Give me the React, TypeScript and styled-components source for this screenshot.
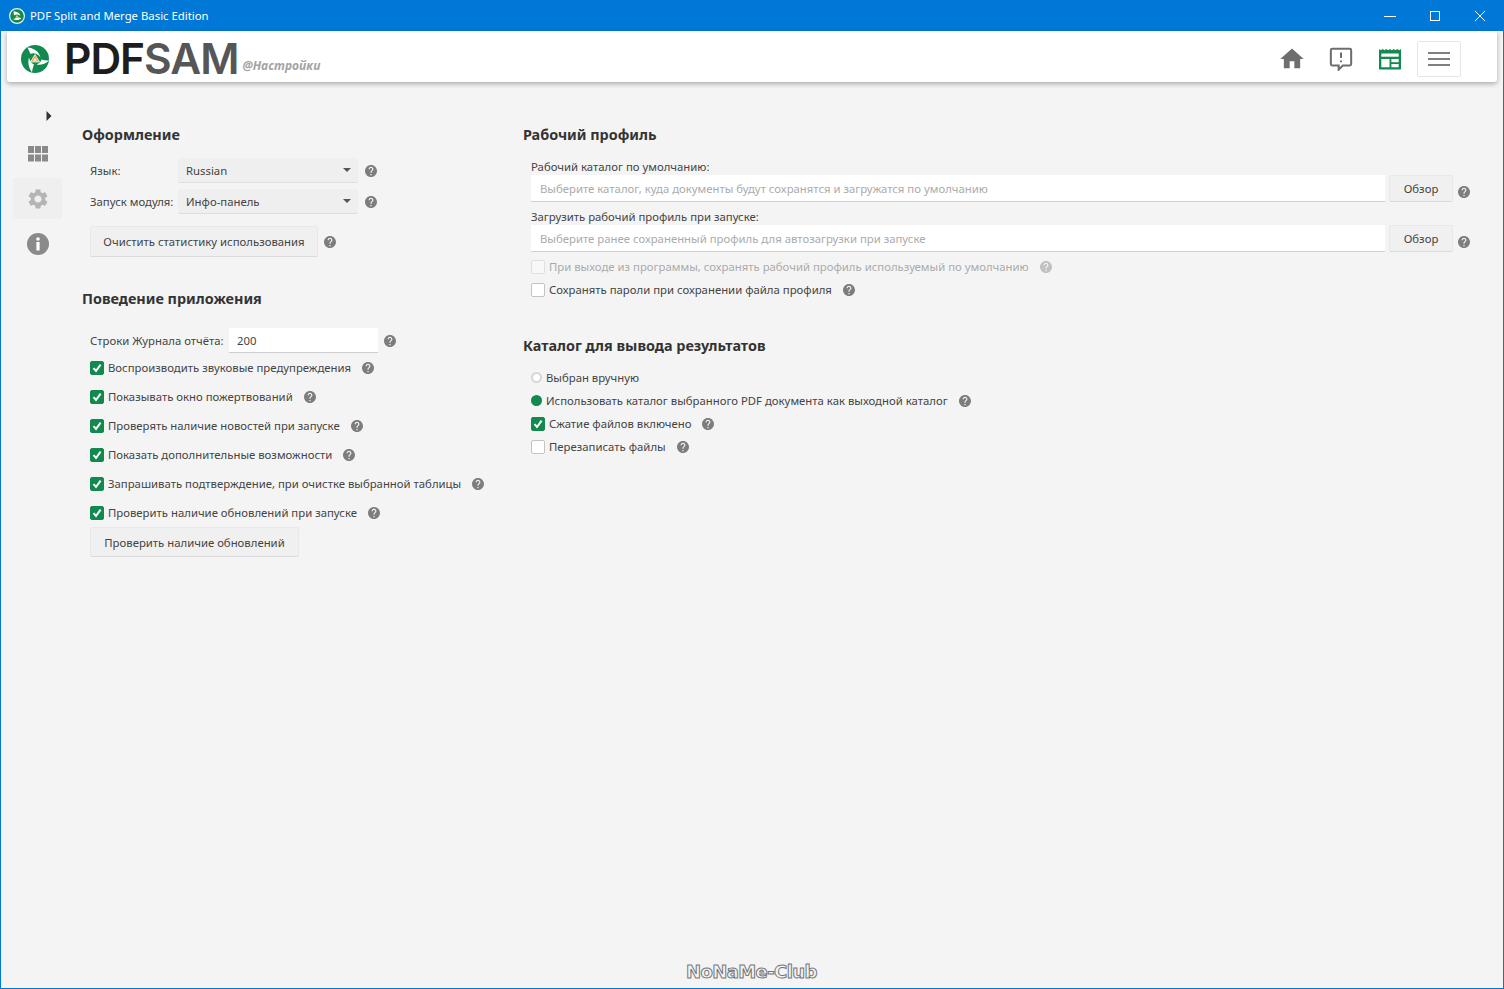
import styled, { createGlobalStyle } from 'styled-components';

const GlobalStyle = createGlobalStyle`
    html, body {
        margin: 0;
        padding: 0;
        background: #f4f4f4;
    }
    * {
        box-sizing: border-box;
    }
`;

const Window = styled.div`
    position: relative;
    width: 1504px;
    height: 989px;
    display: flex;
    flex-direction: column;
    overflow: hidden;
    background: #f4f4f4;
    border: 1px solid #0078d7;
    border-top: 0;
    font-family: 'Noto Sans', 'Open Sans', sans-serif;
    font-size: 11.35px;
    color: #444;
`;

const TitleBar = styled.div`
    height: 31px;
    flex-shrink: 0;
    display: flex;
    align-items: center;
    margin: 0 -1px;
    padding: 0 2px 0 9px;
    background: #0078d7;
    color: #fff;
`;

const TitleText = styled.span`
    margin-left: 5px;
    flex: 1;
`;

const WindowButton = styled.div`
    width: 45px;
    height: 31px;
    display: flex;
    align-items: center;
    justify-content: center;
`;

const Header = styled.header`
    height: 51px;
    flex-shrink: 0;
    margin: 0 6px;
    display: flex;
    align-items: center;
    padding: 5px 36px 0 14px;
    background: #fff;
    border-radius: 0 0 3px 3px;
    box-shadow: 0 2px 5px rgba(0, 0, 0, 0.3);
`;

const Wordmark = styled.div`
    margin-left: 15px;
    font-family: Inter, sans-serif;
    font-size: 42.5px;
    font-weight: 600;
    line-height: 46px;
    letter-spacing: -1px;
    color: #1d1d1d;

    span {
        color: #565656;
    }
`;

const Module = styled.div`
    margin: 12px 0 0 4px;
    font-family: 'Open Sans', sans-serif;
    font-size: 12px;
    font-weight: 700;
    font-style: italic;
    color: #a3a3a3;
`;

const Spacer = styled.div`
    flex: 1;
`;

const HeaderIcon = styled.div`
    width: 49px;
    display: flex;
    justify-content: center;
`;

const MenuButton = styled.div`
    width: 44px;
    height: 36px;
    margin-left: 3px;
    display: flex;
    align-items: center;
    justify-content: center;
    border: 1px solid #e6e6e6;
    border-radius: 2px;
`;

const Body = styled.div`
    flex: 1;
    display: flex;
    min-height: 0;
`;

const Sidebar = styled.nav`
    width: 67px;
    flex-shrink: 0;
    padding-top: 23px;
    display: flex;
    flex-direction: column;
`;

const Toggle = styled.div`
    height: 22px;
    margin-bottom: 4px;
    padding-left: 45px;
    display: flex;
    align-items: center;
`;

const NavItem = styled.div<{ $active?: boolean }>`
    width: 49px;
    height: 41px;
    margin: 2px 0 2px 12px;
    display: flex;
    align-items: center;
    justify-content: center;
    background: ${p => (p.$active ? '#efefef' : 'transparent')};
`;

const LeftColumn = styled.section`
    width: 441px;
    flex-shrink: 0;
    margin-left: 14px;
    padding-top: 43px;
`;

const RightColumn = styled.section`
    flex: 1;
    padding: 43px 33px 0 0;
`;

const Heading = styled.h2<{ $top?: number }>`
    margin: ${p => p.$top ?? 0}px 0 0;
    height: 20px;
    font-size: 14.4px;
    font-weight: 700;
    line-height: 20px;
    color: #333;
`;

const Group = styled.div<{ $top?: number }>`
    margin-top: ${p => p.$top ?? 0}px;
    padding-left: 8px;
`;

const FieldRow = styled.div<{ $top?: number }>`
    display: flex;
    align-items: center;
    margin-top: ${p => p.$top ?? 0}px;
`;

const FieldLabel = styled.span<{ $width: number }>`
    width: ${p => p.$width}px;
    flex-shrink: 0;
    white-space: nowrap;
`;

const Select = styled.div`
    width: 180px;
    height: 25px;
    padding: 0 7px 0 8px;
    display: flex;
    align-items: center;
    justify-content: space-between;
    background: #efefef;
    border-bottom: 1px solid #dedede;
    border-radius: 2px;
`;

const Caret = styled.i`
    width: 0;
    height: 0;
    border-left: 4px solid transparent;
    border-right: 4px solid transparent;
    border-top: 4px solid #555;
`;

const Button = styled.button<{ $width: number; $height?: number }>`
    width: ${p => p.$width}px;
    height: ${p => p.$height ?? 31}px;
    flex-shrink: 0;
    padding: 0;
    background: #f0f0f0;
    border: 1px solid #e8e8e8;
    border-bottom-color: #dadada;
    border-radius: 2px;
    font: inherit;
    color: #444;
`;

const NumberInput = styled.div`
    width: 149px;
    height: 25px;
    padding: 0 8px;
    display: flex;
    align-items: center;
    background: #fff;
    border-bottom: 1px solid #cfcfcf;
`;

const CheckRow = styled.label<{ $height: number; $disabled?: boolean; $top?: number }>`
    height: ${p => p.$height}px;
    margin-top: ${p => p.$top ?? 0}px;
    display: flex;
    align-items: center;
    white-space: nowrap;
    opacity: ${p => (p.$disabled ? 0.42 : 1)};
`;

const Box = styled.span<{ $checked?: boolean }>`
    width: 14px;
    height: 14px;
    margin-right: 4px;
    flex-shrink: 0;
    display: flex;
    align-items: center;
    justify-content: center;
    border-radius: 2px;
    background: ${p => (p.$checked ? '#12894e' : '#fff')};
    border: 1px solid ${p => (p.$checked ? '#12894e' : '#c4c4c4')};
`;

const Radio = styled.span<{ $checked?: boolean }>`
    width: 11px;
    height: 11px;
    margin-right: 4px;
    flex-shrink: 0;
    border-radius: 50%;
    background: ${p => (p.$checked ? '#12894e' : '#fff')};
    border: ${p => (p.$checked ? '0' : '2px solid #d6d6d6')};
`;

const FieldLine = styled.div<{ $top: number }>`
    height: 16px;
    line-height: 16px;
    margin-top: ${p => p.$top}px;
    white-space: nowrap;
`;

const PathRow = styled.div`
    display: flex;
    align-items: center;
`;

const PathInput = styled.div`
    flex: 1;
    height: 27px;
    padding: 0 9px;
    display: flex;
    align-items: center;
    background: #fff;
    border-bottom: 1px solid #cfcfcf;
    color: #ababab;
`;

const BrowseButton = styled(Button)`
    margin-left: 4px;
`;

const HelpWrap = styled.span<{ $gap: number; $drop?: number }>`
    display: inline-flex;
    flex-shrink: 0;
    margin-left: ${p => p.$gap}px;
    margin-top: ${p => p.$drop ?? 0}px;
`;

const Watermark = styled.div`
    position: absolute;
    left: 685px;
    bottom: 6px;
    font-family: 'DejaVu Sans', sans-serif;
    font-size: 18px;
    font-weight: 700;
    letter-spacing: -0.6px;
    color: #f4f4f4;
    -webkit-text-stroke: 1px #777;
`;

const Help = ({ gap, drop }: { gap: number; drop?: number }) => (
    <HelpWrap $gap={gap} $drop={drop}>
        <svg width="12" height="12" viewBox="2 2 20 20" fill="#7d7d7d">
            <path d="M12 2C6.48 2 2 6.48 2 12s4.48 10 10 10 10-4.48 10-10S17.52 2 12 2zm1 17h-2v-2h2v2zm2.07-7.75l-.9.92C13.45 12.9 13 13.5 13 15h-2v-.5c0-1.1.45-2.1 1.17-2.83l1.24-1.26c.37-.36.59-.86.59-1.41 0-1.1-.9-2-2-2s-2 .9-2 2H8c0-2.21 1.79-4 4-4s4 1.79 4 4c0 .88-.36 1.68-.93 2.25z" />
        </svg>
    </HelpWrap>
);

const Tick = () => (
    <svg width="10" height="10" viewBox="0 0 10 10" fill="none" stroke="#fff" strokeWidth="2">
        <path d="M1.5 5.2 L4 8 L8.6 1.6" />
    </svg>
);

const Logo = ({ size }: { size: number }) => (
    <svg width={size} height={size} viewBox="0 0 28 28">
        <circle cx="14" cy="14" r="14" fill="#12894e" />
        <path d="M6.5 2.500 C12 3 18 6 19.500 12.500 C16.500 8.500 12.500 7.500 9.500 9 C8.500 7 7.500 4.500 6.500 2.500Z" fill="#fff" />
        <path d="M28 15.500 C24 19.500 19 20.500 15.500 19.500 C18.500 18.500 20 16.500 20.500 14.500 C23 15.500 25.500 15.800 28 15.500Z" fill="#fff" />
        <path d="M11 27.500 C8 23 6.500 18 8 12.500 C8.800 16 10.500 18.500 13 19.500 C12 22 11.300 25 11 27.500Z" fill="#fff" />
        <path d="M14 9.500 L18.500 17 L9.500 17Z" fill="#f0a63c" stroke="#fff" strokeWidth="0.8" strokeLinejoin="round" />
        <path d="M14 12.800 L15.800 15.700 L12.200 15.700Z" fill="#fff" />
    </svg>
);

const TitleLogo = () => (
    <svg width="16" height="16" viewBox="0 0 16 16">
        <circle cx="8" cy="8" r="7.400" fill="#12894e" stroke="#e6f4ea" strokeWidth="1.200" />
        <path d="M4.500 3.500 C8 3.500 11 5 11.500 8 C10 6.500 7 6 5 7.500Z" fill="#fff" />
        <path d="M4 11 C6 12.500 10 12.500 12.500 10 L9.500 9.500Z" fill="#fff" />
        <path d="M8 6.800 L9.800 9.800 L6.200 9.800Z" fill="#f0c27a" />
    </svg>
);

const leftChecks = [
    'Воспроизводить звуковые предупреждения',
    'Показывать окно пожертвований',
    'Проверять наличие новостей при запуске',
    'Показать дополнительные возможности',
    'Запрашивать подтверждение, при очистке выбранной таблицы',
    'Проверить наличие обновлений при запуске',
];

export default function App() {
    return (
        <Window>
            <GlobalStyle />
            <TitleBar>
                <TitleLogo />
                <TitleText>PDF Split and Merge Basic Edition</TitleText>
                <WindowButton>
                    <svg width="12" height="12" viewBox="0 0 12 12" stroke="#fff" strokeWidth="1">
                        <path d="M0 6.500 H12" />
                    </svg>
                </WindowButton>
                <WindowButton>
                    <svg width="12" height="12" viewBox="0 0 12 12" stroke="#fff" strokeWidth="1" fill="none">
                        <rect x="1.500" y="1.500" width="9" height="9" />
                    </svg>
                </WindowButton>
                <WindowButton>
                    <svg width="12" height="12" viewBox="0 0 12 12" stroke="#fff" strokeWidth="1">
                        <path d="M1 1 L11 11 M11 1 L1 11" />
                    </svg>
                </WindowButton>
            </TitleBar>

            <Header>
                <Logo size={28} />
                <Wordmark>
                    PDF<span>SAM</span>
                </Wordmark>
                <Module>@Настройки</Module>
                <Spacer />
                <HeaderIcon>
                    <svg width="28" height="28" viewBox="0 0 24 24" fill="#6e6e6e">
                        <path d="M10 20v-6h4v6h5v-8h3L12 3 2 12h3v8z" />
                    </svg>
                </HeaderIcon>
                <HeaderIcon>
                    <svg width="24" height="24" viewBox="0 0 26 26" fill="none" stroke="#6e6e6e" strokeWidth="2.200">
                        <path d="M3.500 2 H22.500 Q24 2 24 3.500 V18.500 Q24 20 22.500 20 H15 L10.500 24.500 V20 H3.500 Q2 20 2 18.500 V3.500 Q2 2 3.500 2Z" />
                        <path d="M13 6 V12 M13 14.500 V16.500" />
                    </svg>
                </HeaderIcon>
                <HeaderIcon>
                    <svg width="24" height="22" viewBox="0 0 26 24">
                        <path d="M1 1 l2 1.500 2-1.500 2 1.500 2-1.500 2 1.500 2-1.500 2 1.500 2-1.500 2 1.500 2-1.500 2 1.500 2-1.500 V22.500 Q25 23.500 24 23.500 H2 Q1 23.500 1 22.500Z" fill="#12894e" />
                        <rect x="3.500" y="6" width="19" height="3.500" fill="#fff" />
                        <rect x="3.500" y="12" width="9" height="9" fill="#fff" />
                        <rect x="14.500" y="12" width="8" height="3.500" fill="#fff" />
                        <rect x="14.500" y="17.500" width="8" height="3.500" fill="#fff" />
                    </svg>
                </HeaderIcon>
                <MenuButton>
                    <svg width="22" height="16" viewBox="0 0 22 16" fill="#808080">
                        <rect y="1" width="22" height="2" />
                        <rect y="7" width="22" height="2" />
                        <rect y="13" width="22" height="2" />
                    </svg>
                </MenuButton>
            </Header>

            <Body>
                <Sidebar>
                    <Toggle>
                        <svg width="6" height="10" viewBox="0 0 6 10" fill="#333">
                            <path d="M0.500 0 L5.500 5 L0.500 10Z" />
                        </svg>
                    </Toggle>
                    <NavItem>
                        <svg width="20" height="16" viewBox="0 0 20 16" fill="#8a8a8a">
                            <rect width="6" height="7" />
                            <rect x="7" width="6" height="7" />
                            <rect x="14" width="6" height="7" />
                            <rect y="8.500" width="6" height="7" />
                            <rect x="7" y="8.500" width="6" height="7" />
                            <rect x="14" y="8.500" width="6" height="7" />
                        </svg>
                    </NavItem>
                    <NavItem $active>
                        <svg width="24" height="24" viewBox="0 0 24 24" fill="#b4b4b4">
                            <path d="M19.140 12.940c.04-.3.060-.61.060-.94 0-.32-.02-.64-.07-.94l2.030-1.580c.18-.14.230-.41.120-.61l-1.920-3.320c-.12-.22-.37-.29-.59-.22l-2.390.96c-.5-.38-1.030-.7-1.620-.94l-.36-2.540c-.04-.24-.24-.41-.48-.41h-3.840c-.24 0-.43.17-.47.41l-.36 2.540c-.59.24-1.130.57-1.620.94l-2.390-.96c-.22-.08-.47 0-.59.22L2.740 8.870c-.12.21-.08.47.12.61l2.030 1.580c-.05.3-.09.63-.09.94s.02.64.07.94l-2.030 1.580c-.18.14-.23.41-.12.61l1.920 3.320c.12.22.37.29.59.22l2.390-.96c.5.38 1.030.7 1.620.94l.36 2.540c.05.24.24.41.48.41h3.840c.24 0 .44-.17.47-.41l.36-2.540c.59-.24 1.130-.56 1.620-.94l2.390.96c.22.08.47 0 .59-.22l1.920-3.320c.12-.22.07-.47-.12-.61l-2.010-1.580zM12 15.600c-1.980 0-3.600-1.620-3.600-3.600s1.620-3.600 3.600-3.600 3.600 1.620 3.600 3.600-1.620 3.600-3.600 3.600z" />
                        </svg>
                    </NavItem>
                    <NavItem>
                        <svg width="22" height="22" viewBox="0 0 22 22">
                            <circle cx="11" cy="11" r="11" fill="#8a8a8a" />
                            <circle cx="11" cy="6" r="1.800" fill="#fff" />
                            <rect x="9.400" y="9" width="3.200" height="8.500" fill="#fff" />
                        </svg>
                    </NavItem>
                </Sidebar>

                <LeftColumn>
                    <Heading>Оформление</Heading>
                    <Group $top={13}>
                        <FieldRow>
                            <FieldLabel $width={88}>Язык:</FieldLabel>
                            <Select>
                                Russian
                                <Caret />
                            </Select>
                            <Help gap={7} />
                        </FieldRow>
                        <FieldRow $top={6}>
                            <FieldLabel $width={88}>Запуск модуля:</FieldLabel>
                            <Select>
                                Инфо-панель
                                <Caret />
                            </Select>
                            <Help gap={7} />
                        </FieldRow>
                        <FieldRow $top={12}>
                            <Button $width={228}>Очистить статистику использования</Button>
                            <Help gap={6} />
                        </FieldRow>
                    </Group>

                    <Heading $top={32}>Поведение приложения</Heading>
                    <Group $top={19}>
                        <FieldRow>
                            <FieldLabel $width={139}>Строки Журнала отчёта:</FieldLabel>
                            <NumberInput>200</NumberInput>
                            <Help gap={6} />
                        </FieldRow>
                        {leftChecks.map(text => (
                            <CheckRow key={text} $height={29}>
                                <Box $checked>
                                    <Tick />
                                </Box>
                                {text}
                                <Help gap={11} />
                            </CheckRow>
                        ))}
                        <Button $width={209} $height={30}>
                            Проверить наличие обновлений
                        </Button>
                    </Group>
                </LeftColumn>

                <RightColumn>
                    <Heading>Рабочий профиль</Heading>
                    <Group>
                        <FieldLine $top={14}>Рабочий каталог по умолчанию:</FieldLine>
                        <PathRow>
                            <PathInput>Выберите каталог, куда документы будут сохранятся и загружатся по умолчанию</PathInput>
                            <BrowseButton $width={64} $height={27}>
                                Обзор
                            </BrowseButton>
                            <Help gap={5} drop={6} />
                        </PathRow>
                        <FieldLine $top={7}>Загрузить рабочий профиль при запуске:</FieldLine>
                        <PathRow>
                            <PathInput>Выберите ранее сохраненный профиль для автозагрузки при запуске</PathInput>
                            <BrowseButton $width={64} $height={27}>
                                Обзор
                            </BrowseButton>
                            <Help gap={5} drop={6} />
                        </PathRow>
                        <CheckRow $height={23} $disabled $top={3}>
                            <Box />
                            При выходе из программы, сохранять рабочий профиль используемый по умолчанию
                            <Help gap={11} />
                        </CheckRow>
                        <CheckRow $height={23}>
                            <Box />
                            Сохранять пароли при сохранении файла профиля
                            <Help gap={11} />
                        </CheckRow>
                    </Group>

                    <Heading $top={35}>Каталог для вывода результатов</Heading>
                    <Group $top={10}>
                        <CheckRow $height={23}>
                            <Radio />
                            Выбран вручную
                        </CheckRow>
                        <CheckRow $height={23}>
                            <Radio $checked />
                            Использовать каталог выбранного PDF документа как выходной каталог
                            <Help gap={11} />
                        </CheckRow>
                        <CheckRow $height={23}>
                            <Box $checked>
                                <Tick />
                            </Box>
                            Сжатие файлов включено
                            <Help gap={11} />
                        </CheckRow>
                        <CheckRow $height={23}>
                            <Box />
                            Перезаписать файлы
                            <Help gap={11} />
                        </CheckRow>
                    </Group>
                </RightColumn>
            </Body>
            <Watermark>NoNaMe-Club</Watermark>
        </Window>
    );
}
